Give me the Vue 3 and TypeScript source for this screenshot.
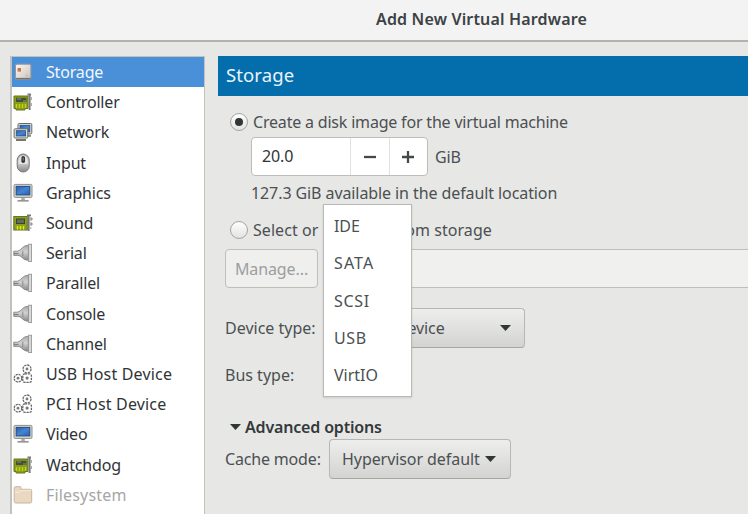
<script setup lang="ts">
import { ref } from 'vue'

type Icon = 'disk' | 'card' | 'network' | 'mouse' | 'monitor' | 'sound' | 'plug' | 'gears' | 'folder'
interface Hardware {
  label: string
  icon: Icon
  wide?: boolean
  disabled?: boolean
}

const hardware: Hardware[] = [
  { label: 'Storage', icon: 'disk' },
  { label: 'Controller', icon: 'card' },
  { label: 'Network', icon: 'network' },
  { label: 'Input', icon: 'mouse' },
  { label: 'Graphics', icon: 'monitor' },
  { label: 'Sound', icon: 'sound' },
  { label: 'Serial', icon: 'plug' },
  { label: 'Parallel', icon: 'plug' },
  { label: 'Console', icon: 'plug' },
  { label: 'Channel', icon: 'plug' },
  { label: 'USB Host Device', icon: 'gears', wide: true },
  { label: 'PCI Host Device', icon: 'gears', wide: true },
  { label: 'Video', icon: 'monitor' },
  { label: 'Watchdog', icon: 'card' },
  { label: 'Filesystem', icon: 'folder', wide: true, disabled: true },
]
const selected = ref('Storage')
const source = ref<'create' | 'select'>('create')
const size = ref(20)
const busTypes = ['IDE', 'SATA', 'SCSI', 'USB', 'VirtIO']

function choose(item: Hardware) {
  if (!item.disabled) selected.value = item.label
}
</script>

<template>
  <div class="window">
    <svg class="defs" width="0" height="0">
      <defs>
        <linearGradient id="screen" x1="0" y1="0" x2="1" y2="1">
          <stop offset="0" stop-color="#2a5ca8" /><stop offset=".5" stop-color="#4585d2" /><stop offset="1" stop-color="#2860ae" />
        </linearGradient>
        <linearGradient id="metal" x1="0" y1="0" x2="0" y2="1">
          <stop offset="0" stop-color="#aaa" /><stop offset=".45" stop-color="#d2d2d2" /><stop offset="1" stop-color="#888" />
        </linearGradient>
        <linearGradient id="case" x1="0" y1="0" x2="1" y2="1">
          <stop offset="0" stop-color="#faf8f5" /><stop offset="1" stop-color="#c8c3be" />
        </linearGradient>
      </defs>
    </svg>
    <header class="titlebar">Add New Virtual Hardware</header>
    <div class="content">
      <ul class="sidebar">
        <li
          v-for="item in hardware"
          :key="item.label"
          :class="{ selected: item.label === selected, disabled: item.disabled, wide: item.wide }"
          @click="choose(item)"
        >
          <svg class="icon" viewBox="0 0 20 20">
            <template v-if="item.icon === 'disk'">
              <rect x="2.5" y="2.2" width="15.4" height="15.2" rx="1.5" fill="url(#case)" stroke="#97979a" />
              <path d="M3 16.6H17.5" stroke="#77716c" stroke-width="1.4" />
              <rect x="4.6" y="6" width="3.4" height="3.6" fill="#d66f3c" />
              <path d="M12 14h4M14 12v3" stroke="#c5c0ba" />
            </template>
            <template v-else-if="item.icon === 'card'">
              <path d="M1 4H15V16.5H12V18H3V16.5H1Z" fill="#8d9c18" stroke="#65761d" />
              <rect x="3" y="5.8" width="10.5" height="4.2" fill="#415238" />
              <path d="M4 7h4m2 2h3" stroke="#849875" />
              <path d="M3.5 12v4m3-4v4m3-4v4m3-4v4" stroke="#bfd51b" stroke-width="1.4" />
              <path d="M14.5 2.5H18M16.6 2.5V18" stroke="#777b78" stroke-width="2" fill="none" />
              <path d="M18.5 5v3m0 3v3" stroke="#aaa" />
            </template>
            <template v-else-if="item.icon === 'sound'">
              <rect x=".8" y="3.5" width="13.5" height="13.5" fill="#8e9d1c" stroke="#677527" />
              <rect x="3.5" y="6" width="8" height="4.5" fill="#626d5b" stroke="#384535" />
              <path d="M4.5 13v3.5m3-3.5v3.5m3-3.5v3.5" stroke="#dced19" stroke-width="1.5" />
              <path d="M14 2.3H18M15.7 2.5V18" stroke="#777" stroke-width="1.8" />
              <path d="M17 5h2v2h-2m0 3h2v2h-2m0 3h1.5" fill="#ddd" stroke="#888" />
            </template>
            <template v-else-if="item.icon === 'network'">
              <rect x="5" y="1.5" width="13.8" height="10.4" rx="1.2" fill="#d9dad6" stroke="#666963" />
              <rect x="7" y="3.3" width="9.8" height="6.6" fill="url(#screen)" stroke="#244b83" stroke-width=".7" />
              <path d="M12 13.8h6" stroke="#858783" stroke-width="2" />
              <rect x="1.1" y="6.8" width="13.7" height="9.2" rx="1" fill="#e0e1dd" stroke="#666963" />
              <rect x="3.2" y="8.7" width="9.5" height="5.3" fill="url(#screen)" stroke="#244b83" stroke-width=".7" />
              <path d="M3 18h10" stroke="#747670" stroke-width="2" />
            </template>
            <template v-else-if="item.icon === 'mouse'">
              <rect x="4.2" y="1" width="12" height="18" rx="6" fill="url(#metal)" stroke="#777" />
              <path d="M5.8 8q0-5 4.4-5.8Q14.6 3 14.6 8v3H5.8Z" fill="#e4e4e4" />
              <rect x="8.4" y="3" width="3.6" height="7" rx="1.8" fill="#333" />
              <path d="M10.2 4.5v3" stroke="#888" />
            </template>
            <template v-else-if="item.icon === 'monitor'">
              <rect x="1" y="1.4" width="18" height="13" rx="1.2" fill="#d4d5d1" stroke="#8d8f8a" />
              <rect x="3.2" y="3.4" width="13.6" height="8.5" fill="url(#screen)" stroke="#244c87" />
              <path d="M8.3 15h3.5v2H8.3z" fill="#aaa" />
              <path d="M4.5 17.8h11.2" stroke="#969895" stroke-width="1.7" />
            </template>
            <template v-else-if="item.icon === 'plug'">
              <path d="M.8 8.2H4.6Q7.4 7.4 9.4 4.7q1.9-2.3 6-2.5V17.2q-4.4 0-6.4-2.8Q7 12.2 4.6 12.4H.8Z" fill="url(#metal)" stroke="#858585" stroke-width=".9" />
              <path d="M1 10.4h4.5" stroke="#777" />
              <path d="M9.8 7.6v5.4" stroke="#8a8a8a" />
              <rect x="15.6" y="1.2" width="3" height="17.4" fill="#d8d8d8" stroke="#929292" stroke-width=".8" />
            </template>
            <template v-else-if="item.icon === 'gears'">
              <g fill="#fff" stroke="#666" stroke-width="1.3">
                <circle cx="14" cy="5" r="4" stroke-dasharray="2.3 .8" />
                <circle cx="5" cy="14.2" r="3.8" stroke-dasharray="2.2 .8" />
                <rect x="9.8" y="9.8" width="8.6" height="8.6" rx="2" stroke-dasharray="2.3 .8" />
              </g>
              <g fill="#777"><circle cx="14" cy="5" r="1.4" /><circle cx="5" cy="14.2" r="1.4" /><circle cx="14.1" cy="14.1" r="1.6" /></g>
            </template>
            <template v-else>
              <path d="M1.2 16.5V3q0-1.3 1.3-1.3H7q1 0 1 1V4.3h9.3q1.4 0 1.4 1.4V16.5q0 1.5-1.4 1.5H2.5q-1.3 0-1.3-1.5Z" fill="#ead8c0" stroke="#c5b6a3" />
              <path d="M2 7.2h4.5l1.8-1.8H18" stroke="#f7eddf" fill="none" />
            </template>
          </svg>
          <span>{{ item.label }}</span>
        </li>
      </ul>

      <main class="panel">
        <h1>Storage</h1>
        <label class="choice" @click="source = 'create'">
          <i class="radio" :class="{ on: source === 'create' }"></i>
          <span class="t-create">Create a disk image for the virtual machine</span>
        </label>
        <div class="size-row">
          <div class="spin">
            <span class="value">{{ size.toFixed(1) }}</span>
            <button @click="size--"><svg viewBox="0 0 12 12"><path d="M0 6H12" /></svg></button>
            <button @click="size++"><svg viewBox="0 0 12 12"><path d="M0 6H12M6 0V12" /></svg></button>
          </div>
          <span class="unit">GiB</span>
        </div>
        <p class="available">127.3 GiB available in the default location</p>
        <label class="choice second" @click="source = 'select'">
          <i class="radio" :class="{ on: source === 'select' }"></i>
          <span class="t-select">Select or create custom storage</span>
        </label>
        <div class="manage-row">
          <button class="manage" disabled>Manage...</button>
          <div class="path"></div>
        </div>
        <div class="field device">
          <span class="name">Device type:</span>
          <div class="combo"><span>Disk device</span><i class="arrow"></i></div>
        </div>
        <div class="field bus">
          <span class="name">Bus type:</span>
          <ul class="menu">
            <li v-for="bus in busTypes" :key="bus" :class="bus.toLowerCase()">{{ bus }}</li>
          </ul>
        </div>
        <div class="advanced"><i class="arrow"></i><span>Advanced options</span></div>
        <div class="field cache">
          <span class="name">Cache mode:</span>
          <div class="combo"><span>Hypervisor default</span><i class="arrow"></i></div>
        </div>
      </main>
    </div>
  </div>
</template>

<style>
body { margin: 0; overflow: hidden; }
</style>

<style scoped>
* { box-sizing: border-box; }
.window {
  width: 748px; height: 514px; overflow: hidden; display: flex; flex-direction: column;
  background: #e7e7e6; color: #4b5052; font: 16px/22px "Noto Sans", sans-serif; letter-spacing: -.1px;
  white-space: nowrap;
}
.defs { position: absolute; }
ul, h1, p { margin: 0; padding: 0; list-style: none; font-weight: 400; }
button { font: inherit; letter-spacing: inherit; padding: 0; }
.titlebar {
  height: 42px; flex: none; padding: 8px 0 0 376px; background: #f3f3f3; border-bottom: 2px solid #b2b2b1;
  color: #3c4244; font-weight: 600; letter-spacing: .16px;
}
.content { flex: 1; display: flex; gap: 13px; padding: 14px 0 0 10px; min-height: 0; }
.sidebar {
  width: 195px; height: 480px; flex: none; background: #fff; border: 1px solid #c1c1bd; border-width: 1px 1px 0 2px;
  color: #303436; letter-spacing: -.17px;
}
.sidebar li { height: 30.2px; display: flex; align-items: center; gap: 13px; padding-left: 1px; }
.sidebar li.selected { background: #4a90d9; color: #f2f7fd; }
.sidebar li.disabled { color: #a5a6a6; }
.sidebar li.wide { letter-spacing: .17px; }
.icon { width: 20px; height: 20px; flex: none; }
.panel { flex: 1; min-width: 0; display: flex; flex-direction: column; align-items: stretch; }
h1 { height: 40px; padding: 0 8px; background: #036eab; color: #e9f4fb; font-size: 18.5px; line-height: 38px; letter-spacing: .1px; }
.choice { display: flex; align-items: center; height: 22px; gap: 5px; padding-left: 12px; margin-top: 15px; }
.t-create { letter-spacing: -.19px; }
.t-select { letter-spacing: .06px; }
.radio { width: 18px; height: 18px; border: 1px solid #a4a4a2; border-radius: 50%; background: linear-gradient(#fff, #e2e2e1); display: grid; place-items: center; }
.radio.on::after { content: ""; width: 8px; height: 8px; border-radius: 50%; background: #303537; }
.size-row { display: flex; align-items: center; gap: 7px; padding-left: 33px; margin-top: 4px; }
.spin { width: 177px; height: 39px; display: flex; background: #fff; border: 1px solid #bdbdba; border-radius: 4px; color: #303436; }
.value { flex: 1; padding-left: 10px; line-height: 37px; }
.spin button { width: 38.5px; border: 0; border-left: 1px solid #e1e1e0; background: none; display: grid; place-items: center; }
.spin svg { width: 12px; height: 12px; stroke: #43494b; stroke-width: 2.3; }
.available { padding-left: 33px; margin-top: 6px; letter-spacing: -.09px; }
.choice.second { margin-top: 15px; }
.manage-row { display: flex; gap: 6px; margin-top: 8px; }
.manage { width: 93px; height: 39px; border: 1px solid #bebebb; border-radius: 4px; background: #efefee; color: #9c9e9e; margin-left: 7px; }
.path { flex: 1; height: 39px; background: #f0f0ef; border: 1px solid #bebebb; border-right: 0; border-radius: 4px 0 0 4px; }
.field { display: flex; align-items: center; padding-left: 7px; }
.combo {
  height: 40px; display: flex; align-items: center; justify-content: space-between; padding: 0 14px 0 12px;
  border: 1px solid #b7b7b4; border-bottom-color: #a6a6a3; border-radius: 4px; background: linear-gradient(#eeeeed, #d3d3d2);
}
.arrow { width: 11px; height: 6px; background: #303537; clip-path: polygon(0 0, 100% 0, 50% 100%); flex: none; }
.device { margin-top: 20px; }
.name { letter-spacing: 0; }
.device .name, .bus .name { width: 98px; }
.device .combo { width: 202px; padding: 0 13px 0 38px; }
.bus { position: relative; height: 22px; margin-top: 16px; }
.menu {
  position: absolute; left: 105px; bottom: -11px; width: 89px; height: 193px; padding: 2px 10px;
  background: #fff; border: 1px solid #b9b9b6; box-shadow: 0 1px 2px rgba(0, 0, 0, .12);
}
.menu li { height: 37.3px; line-height: 38px; }
.menu .sata { letter-spacing: 1.1px; }
.menu .scsi { letter-spacing: .65px; }
.menu .usb { letter-spacing: .6px; }
.menu .virtio { letter-spacing: 0; }
.advanced { display: flex; align-items: center; gap: 4px; padding-left: 12px; margin-top: 30px; font-weight: 600; letter-spacing: -.17px; color: #34393b; }
.cache { margin-top: 1px; }
.cache .name { width: 104px; letter-spacing: -.17px; }
.cache .combo { width: 182px; letter-spacing: -.07px; }
</style>
